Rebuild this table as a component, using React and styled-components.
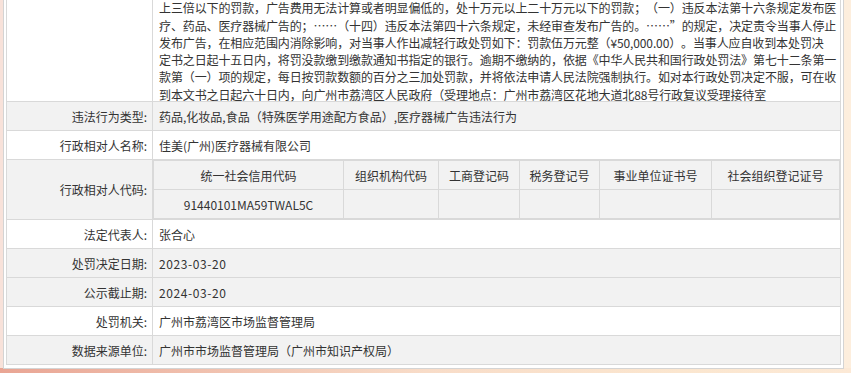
import React from "react";
import styled, { createGlobalStyle } from "styled-components";

const Global = createGlobalStyle`
  html, body { margin: 0; padding: 0; }
  body {
    font-family: "Noto Sans CJK SC", "Noto Sans", sans-serif;
    font-size: 12px;
    color: #333;
    text-spacing-trim: space-all;
    background:
      linear-gradient(to right, #e9a594 0%, #efbcaa 20%, #f8dcc8 50%, #fbe6cf 80%, #fce9d6 100%) bottom / 100% 5px no-repeat,
      linear-gradient(to right, #f8e2da 0%, #fbede6 45%, #fdf2e6 80%, #fdeedd 100%);
    min-height: 100vh;
  }
`;

const Page = styled.div`
  height: 100vh;
  overflow: hidden;
  display: flex;
  flex-direction: column;
  justify-content: flex-end;
  padding: 0 0 4px 3px;
  box-sizing: border-box;
`;

const Frame = styled.div`
  flex: none;
  width: 841px;
  box-sizing: border-box;
  background: #fff;
  border: 1px solid #d4d4d4;
  padding: 2px 3px 3px 2px;
`;

const Table = styled.table`
  width: 834px;
  border-collapse: collapse;
  table-layout: fixed;
  border: 1px solid #d9d9d9;
`;

const Row = styled.tr`
  background: ${(p) => (p.$grey ? "#f2f2f2" : "#fff")};
`;

const Label = styled.td`
  border: 1px solid #d9d9d9;
  height: 28px;
  padding: 0 5px 0 0;
  text-align: right;
  vertical-align: middle;
  color: #333;
  line-height: 17px;
  white-space: nowrap;
`;

const Value = styled.td`
  border: 1px solid #d9d9d9;
  height: 28px;
  padding: ${(p) => (p.$flush ? "0" : "0 6px")};
  text-align: left;
  vertical-align: middle;
  color: #333;
  line-height: 17px;
  white-space: nowrap;
  letter-spacing: ${(p) => (p.$wide ? "0.6px" : "normal")};
`;

const Para = styled.td`
  border: 1px solid #d9d9d9;
  padding: 4px 6px 0;
  line-height: 17.3px;
  color: #333;
  vertical-align: bottom;
  letter-spacing: -0.12px;
`;

const TextBlock = styled.div`
  margin-bottom: -2px;
`;

const Line = styled.span`
  display: block;
  white-space: nowrap;
`;

const Inner = styled.table`
  width: 100%;
  border-collapse: collapse;
  table-layout: fixed;
  background: #f2f2f2;
  border: 1px solid #d9d9d9;
`;

const Head = styled.th`
  border: 1px solid #d9d9d9;
  height: 28px;
  padding: 0;
  font-weight: normal;
  text-align: center;
  vertical-align: middle;
  color: #333;
  white-space: nowrap;
`;

const Cell = styled.td`
  border: 1px solid #d9d9d9;
  height: 28px;
  padding: 0;
  text-align: center;
  vertical-align: middle;
  color: #333;
  white-space: nowrap;
`;

const lines = [
  "上三倍以下的罚款，广告费用无法计算或者明显偏低的，处十万元以上二十万元以下的罚款；（一）违反本法第十六条规定发布医",
  "疗、药品、医疗器械广告的；……（十四）违反本法第四十六条规定，未经审查发布广告的。……”的规定，决定责令当事人停止",
  "发布广告，在相应范围内消除影响，对当事人作出减轻行政处罚如下：罚款伍万元整（¥50,000.00）。当事人应自收到本处罚决",
  "定书之日起十五日内，将罚没款缴到缴款通知书指定的银行。逾期不缴纳的，依据《中华人民共和国行政处罚法》第七十二条第一",
  "款第（一）项的规定，每日按罚款数额的百分之三加处罚款，并将依法申请人民法院强制执行。如对本行政处罚决定不服，可在收",
  "到本文书之日起六十日内，向广州市荔湾区人民政府（受理地点：广州市荔湾区花地大道北88号行政复议受理接待室",
];

const codeHeads = [
  ["统一社会信用代码", 190],
  ["组织机构代码", 95],
  ["工商登记码", 81],
  ["税务登记号", 80],
  ["事业单位证书号", 112],
  ["社会组织登记证号", 128],
];

const codeValues = ["91440101MA59TWAL5C", "", "", "", "", ""];

const simpleRows = [
  ["法定代表人:", "张合心", false, false],
  ["处罚决定日期:", "2023-03-20", true, true],
  ["公示截止期:", "2024-03-20", true, true],
  ["处罚机关:", "广州市荔湾区市场监督管理局", false, false],
  ["数据来源单位:", "广州市市场监督管理局（广州市知识产权局）", true, false],
];

export default function App() {
  return (
    <>
      <Global />
      <Page>
        <Frame>
          <Table>
            <colgroup>
              <col style={{ width: 146 }} />
              <col style={{ width: 688 }} />
            </colgroup>
            <tbody>
              <Row>
                <Label />
                <Para>
                  <TextBlock>
                    {lines.map((l, i) => (
                      <Line key={i}>{l}</Line>
                    ))}
                  </TextBlock>
                </Para>
              </Row>
              <Row $grey>
                <Label>违法行为类型:</Label>
                <Value>药品,化妆品,食品（特殊医学用途配方食品）,医疗器械广告违法行为</Value>
              </Row>
              <Row>
                <Label>行政相对人名称:</Label>
                <Value>佳美(广州)医疗器械有限公司</Value>
              </Row>
              <Row $grey>
                <Label>行政相对人代码:</Label>
                <Value $flush>
                  <Inner>
                    <colgroup>
                      {codeHeads.map(([h, w]) => (
                        <col key={h} style={{ width: w }} />
                      ))}
                    </colgroup>
                    <tbody>
                      <tr>
                        {codeHeads.map(([h]) => (
                          <Head key={h}>{h}</Head>
                        ))}
                      </tr>
                      <tr>
                        {codeValues.map((v, i) => (
                          <Cell key={i}>{v}</Cell>
                        ))}
                      </tr>
                    </tbody>
                  </Inner>
                </Value>
              </Row>
              {simpleRows.map(([l, v, g, w]) => (
                <Row key={l} $grey={g}>
                  <Label>{l}</Label>
                  <Value $wide={w}>{v}</Value>
                </Row>
              ))}
            </tbody>
          </Table>
        </Frame>
      </Page>
    </>
  );
}
